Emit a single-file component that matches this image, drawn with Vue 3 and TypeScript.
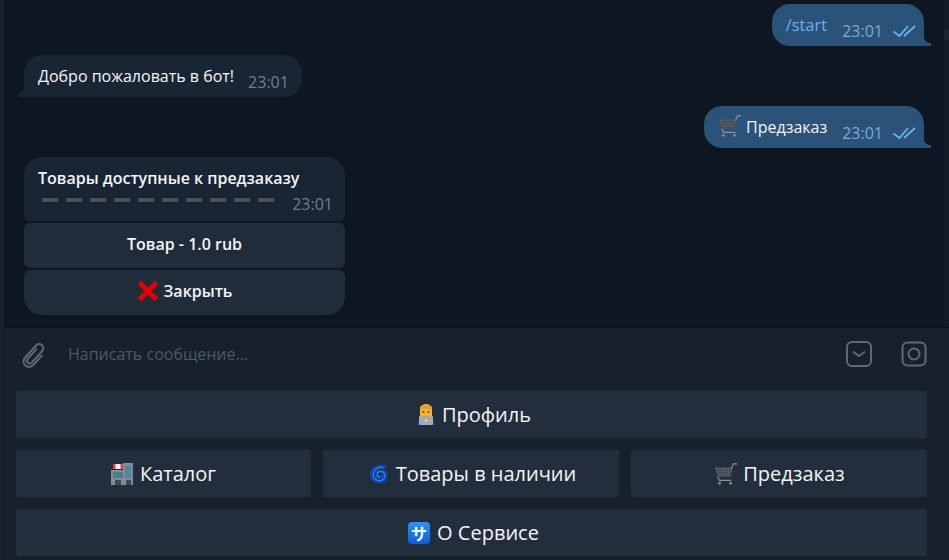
<template>
  <div class="window">
    <div class="chat">
      <div class="msg-list">
        <div class="row out">
          <div class="bubble out-bubble">
            <span class="link">/start</span>
            <span class="time">23:01</span>
            <svg class="ticks" viewBox="0 0 24 14" width="24" height="14">
              <path d="M1.500 7.500L7.500 12L16 2M12 12L23 2" fill="none" stroke="currentColor" stroke-width="1.700" />
            </svg>
          </div>
        </div>
        <div class="row">
          <div class="bubble in-bubble">
            <span class="msg-text">Добро пожаловать в бот!</span>
            <span class="time">23:01</span>
          </div>
        </div>
        <div class="row out">
          <div class="bubble out-bubble">
            <svg class="cart small" viewBox="0 0 24 24" width="22" height="22">
              <use href="#cart-shape" />
            </svg>
            <span class="msg-text">Предзаказ</span>
            <span class="time">23:01</span>
            <svg class="ticks" viewBox="0 0 24 14" width="24" height="14">
              <path d="M1.500 7.500L7.500 12L16 2M12 12L23 2" fill="none" stroke="currentColor" stroke-width="1.700" />
            </svg>
          </div>
        </div>
        <div class="inline-group">
          <div class="card">
            <div class="card-title">Товары доступные к предзаказу</div>
            <div class="card-foot">
              <div class="dashes">
                <i v-for="n in 10" :key="n" />
              </div>
              <span class="time">23:01</span>
            </div>
          </div>
          <button class="inline-btn">Товар - 1.0 rub</button>
          <button class="inline-btn last">
            <svg viewBox="0 0 22 22" width="22" height="22">
              <path d="M2.500 2.500l17 17M19.500 2.500l-17 17" stroke="#e60000" stroke-width="5" fill="none" />
            </svg>
            Закрыть
          </button>
        </div>
      </div>
      <div class="composer">
        <svg class="clip" viewBox="0 0 26 28" width="26" height="28">
          <g transform="translate(13 14) rotate(42) scale(.92) translate(-8 -16)">
            <path d="M5 9V23a3 3 0 0 0 6 0V6a4.500 4.500 0 0 0-9 0V24a6 6 0 0 0 12 0V10" fill="none" stroke="currentColor" stroke-width="2.200" stroke-linecap="round" />
          </g>
        </svg>
        <span class="placeholder">Написать сообщение...</span>
        <svg class="tool" viewBox="0 0 28 28" width="28" height="28">
          <rect x="2" y="2" width="24" height="24" rx="5" fill="none" stroke="currentColor" stroke-width="2" />
          <path d="M8.500 12l5.500 4 5.500-4" fill="none" stroke="currentColor" stroke-width="2" stroke-linecap="round" />
        </svg>
        <svg class="tool cam" viewBox="0 0 28 28" width="28" height="28">
          <rect x="2.500" y="2.500" width="23" height="23" rx="5" fill="none" stroke="currentColor" stroke-width="2" />
          <circle cx="14" cy="14" r="5.500" fill="none" stroke="currentColor" stroke-width="2" />
        </svg>
      </div>
      <div class="keyboard">
        <button class="key shift-5">
          <svg viewBox="0 0 18 21" width="18" height="21">
            <path d="M0 21l2-6h14l2 6z" fill="#2b3fa8" />
            <path d="M3 8C3 2 5 0 9 0s6 2 6 8v4H3z" fill="#f5b335" />
            <path d="M3 6c3-1.500 9-1.500 12 0V3C13 0 5 0 3 3z" fill="#e8a024" />
            <circle cx="6.500" cy="8" r="1" fill="#5a3a12" />
            <circle cx="11.500" cy="8" r="1" fill="#5a3a12" />
            <rect x="2" y="12" width="14" height="9" rx="1" fill="#a7abb0" />
            <circle cx="9" cy="16.500" r="1" fill="#eceff2" />
          </svg>
          Профиль
        </button>
        <div class="key-row">
          <button class="key">
            <svg viewBox="0 0 22 22" width="22" height="22">
              <rect x="12" y="0" width="10" height="22" fill="#7f8a92" />
              <rect x="0" y="7" width="14" height="15" fill="#868d92" />
              <rect x="2" y="1" width="10" height="5" fill="#e5413a" />
              <rect x="4.500" y="1" width="5" height="5" fill="#f4f1ec" />
              <rect x="2" y="9" width="10" height="6" fill="#4d7a98" />
              <rect x="14" y="3" width="6" height="12" fill="#4d86a8" />
              <rect x="4" y="17" width="6" height="5" fill="#3e4a52" />
              <rect x="15" y="17" width="5" height="5" fill="#3e4a52" />
            </svg>
            Каталог
          </button>
          <button class="key shift-4">
            <svg viewBox="0 0 20 20" width="19" height="20">
              <path d="M15.500 2.500C9 0 1.500 4 1.500 10.500c0 5 3.800 8 8.200 8s7.300-3.200 7.300-6.800-2.800-5.500-5.800-5.500-4.700 2.200-4.700 4.300 1.500 3.500 3.500 3.500 3-1.300 3-2.600" fill="none" stroke="#0d47c9" stroke-width="3" stroke-linecap="round" />
              <path d="M14 3.500C9 2 3.500 5 3.500 10.500c0 4 3 6.500 6.500 6.500s5.500-2.500 5.500-5.300-2.200-4.200-4.300-4.200-3.500 1.500-3.500 3 1.100 2.500 2.500 2.500" fill="none" stroke="#2c8fec" stroke-width="1.200" stroke-linecap="round" />
            </svg>
            Товары в наличии
          </button>
          <button class="key shift-2 tight">
            <svg class="cart" viewBox="0 0 24 24" width="22" height="22">
              <use href="#cart-shape" />
            </svg>
            Предзаказ
          </button>
        </div>
        <button class="key shift-4">
          <span class="sa-box">サ</span>
          О Сервисе
        </button>
      </div>
    </div>
    <div class="scroll-track"><div class="scroll-thumb" /></div>
    <svg class="defs" width="0" height="0">
      <defs>
        <g id="cart-shape">
          <path d="M0 5h19l-2 10H3z" fill="#5b6167" />
          <path d="M0.500 8h18M1 11h17M2 14h15M4 5v10M7 5v10M10 5v10M13 5v10M16 5v10" stroke="#3f444a" stroke-width=".8" />
          <path d="M18 6l2-5h4" fill="none" stroke="#8d9398" stroke-width="1.200" />
          <path d="M3 15l2 4h13" fill="none" stroke="#8d9398" stroke-width="1.200" />
          <circle cx="5" cy="22" r="1.600" fill="#7f8489" />
          <circle cx="17" cy="22" r="1.600" fill="#7f8489" />
        </g>
      </defs>
    </svg>
  </div>
</template>

<script setup lang="ts">
</script>

<style>
html,
body {
  margin: 0;
  background: #17212b;
}
</style>

<style scoped>
.window {
  position: relative;
  width: 949px;
  height: 560px;
  overflow: hidden;
  font-family: "Open Sans", "Noto Sans", sans-serif;
  background: #17212b;
  color: #f5f5f5;
}
.chat {
  height: 100%;
  margin-left: 4px;
  border-left: 1px solid #101921;
  display: flex;
  flex-direction: column;
}
.msg-list {
  height: 328px;
  padding: 4px 25px 0 19px;
  box-sizing: border-box;
  background: #0e1621;
  border-bottom: 1px solid #0b111a;
  display: flex;
  flex-direction: column;
}
.row {
  display: flex;
  margin-bottom: 9px;
  height: 42px;
}
.row.out {
  justify-content: flex-end;
}
.bubble {
  height: 42px;
  box-sizing: border-box;
  padding: 0 13px 0 14px;
  display: flex;
  align-items: center;
  font-size: 16px;
  position: relative;
}
.in-bubble {
  background: #182533;
  border-radius: 18px 18px 18px 0;
}
.in-bubble::before {
  content: "";
  position: absolute;
  left: -6px;
  bottom: 0;
  width: 6px;
  height: 10px;
  background: radial-gradient(circle at 0 0, transparent 6px, #182533 6.500px);
}
.out-bubble {
  background: #2b5278;
  border-radius: 18px 18px 0 18px;
  padding-right: 8px;
}
.out-bubble::after {
  content: "";
  position: absolute;
  right: -7px;
  bottom: 0;
  width: 7px;
  height: 10px;
  background: radial-gradient(circle at 100% 0, transparent 7px, #2b5278 7.500px);
}
.time {
  font-size: 16px;
  color: #6d7f8f;
  margin-left: 14px;
  margin-top: 11px;
}
.out-bubble .time {
  color: #7dabd4;
  margin-left: 15px;
}
.ticks {
  color: #6ab3f3;
  margin-left: 9px;
  margin-top: 12px;
}
.msg-text {
  margin-top: -1px;
}
.link {
  color: #6ab3f3;
  margin-top: -1px;
  letter-spacing: 0.2px;
}
.cart.small {
  margin-left: 1px;
  margin-right: 5px;
  margin-top: -2px;
}
.inline-group {
  width: 321px;
  display: flex;
  flex-direction: column;
  gap: 2px;
}
.card {
  background: #182533;
  border-radius: 18px 18px 6px 6px;
  height: 64px;
  box-sizing: border-box;
  padding: 10px 12px 0 14px;
}
.card-title {
  font-size: 16px;
  font-weight: 600;
  line-height: 22px;
}
.card-foot {
  display: flex;
  justify-content: space-between;
  align-items: flex-start;
}
.card-foot .time {
  margin-top: 4px;
  line-height: 22px;
}
.dashes {
  display: flex;
  gap: 8px;
  margin-left: 4px;
  margin-top: 9px;
}
.dashes i {
  display: block;
  width: 16px;
  height: 4px;
  background: #4d4f51;
}
.inline-btn {
  height: 45px;
  border: 0;
  background: #1f2c3a;
  border-radius: 6px;
  color: #f5f5f5;
  font-family: inherit;
  font-size: 16px;
  font-weight: 600;
  display: flex;
  align-items: center;
  justify-content: center;
  gap: 5px;
  padding: 0 0 4px;
}
.inline-btn.last {
  border-radius: 6px 6px 18px 18px;
}
.composer {
  height: 52px;
  display: flex;
  align-items: center;
  color: #5d6a75;
  background: #17212b;
}
.clip {
  margin-left: 16px;
  margin-top: 4px;
  color: #5d6a75;
}
.placeholder {
  font-size: 16px;
  color: #4c5866;
  margin-left: 21px;
  flex: 1;
}
.tool {
  margin-right: 27px;
}
.tool.cam {
  margin-right: 21px;
}
.keyboard {
  margin-left: 11px;
  margin-right: 22px;
  margin-top: 11px;
  display: flex;
  flex-direction: column;
  gap: 12px;
}
.key-row {
  display: grid;
  grid-template-columns: 295px 296px 296px;
  gap: 12px;
}
.key {
  height: 47px;
  border: 0;
  background: #232e3c;
  border-radius: 2px;
  color: #f5f5f5;
  font-family: inherit;
  font-size: 20px;
  font-weight: 500;
  display: flex;
  align-items: center;
  justify-content: center;
  gap: 7px;
  padding: 0;
}
.key.tight {
  gap: 6px;
}
.shift-2 {
  padding-left: 2px;
}
.shift-4 {
  padding-left: 4px;
}
.shift-5 {
  padding-left: 5px;
}
.sa-box {
  width: 22px;
  height: 22px;
  border-radius: 4px;
  background: linear-gradient(#2a95f5, #0a5fd8);
  color: #fff;
  font-size: 16px;
  font-weight: 700;
  font-family: "Noto Sans CJK JP", sans-serif;
  display: flex;
  align-items: center;
  justify-content: center;
}
.scroll-track {
  position: absolute;
  top: 0;
  right: 0;
  width: 5px;
  height: 327px;
  background: #121b26;
}
.scroll-thumb {
  margin-top: 30px;
  height: 10px;
  background: #1b2530;
}
.defs {
  position: absolute;
}
</style>
